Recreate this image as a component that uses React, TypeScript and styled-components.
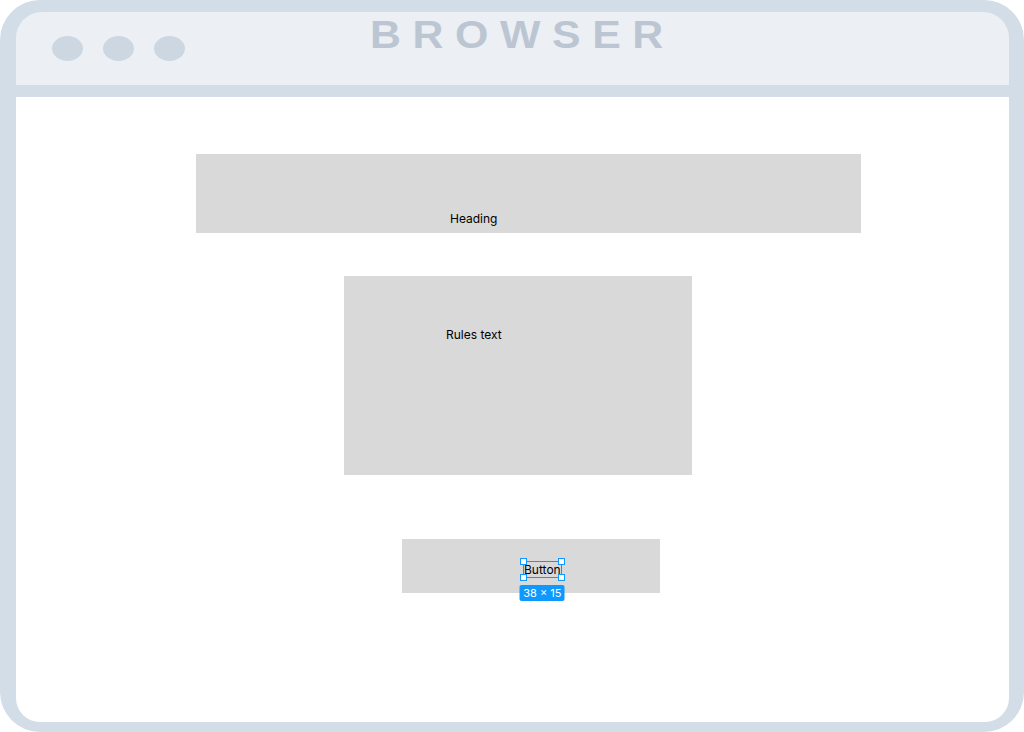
import React from "react";
import styled, { createGlobalStyle } from "styled-components";

const GlobalStyle = createGlobalStyle`
  html, body {
    margin: 0;
    padding: 0;
    background: #ffffff;
  }
  body {
    font-family: Inter, "Noto Sans", sans-serif;
  }
`;

const Frame = styled.div`
  width: 1024px;
  height: 732px;
  box-sizing: border-box;
  background: #d3dde7;
  border-radius: 40px;
  padding: 12px 15px 10px 16px;
  display: flex;
  flex-direction: column;
  gap: 12px;
`;

const TitleBar = styled.div`
  height: 73px;
  flex-shrink: 0;
  background: #ecf0f4;
  border-radius: 26px 26px 0 0;
  display: flex;
  align-items: flex-start;
`;

const Dots = styled.div`
  display: flex;
  gap: 20px;
  margin: 24px 0 0 36px;
`;

const Dot = styled.span`
  width: 31px;
  height: 25px;
  border-radius: 50%;
  background: #cdd7e2;
`;

const Title = styled.div`
  margin: 3px 0 0 185px;
  font-family: "Liberation Sans", Arial, sans-serif;
  font-weight: bold;
  font-size: 39px;
  line-height: 39px;
  letter-spacing: 10.5px;
  color: #bcc6d3;
  transform: scaleX(1.1);
  transform-origin: left center;
`;

const Content = styled.div`
  flex: 1;
  background: #ffffff;
  border-radius: 0 0 24px 24px;
  padding-top: 57px;
  display: flex;
  flex-direction: column;
  align-items: flex-start;
`;

const Block = styled.div<{ $left: number; $w: number; $h: number; $gap: number }>`
  margin-left: ${(p) => p.$left}px;
  margin-top: ${(p) => p.$gap}px;
  width: ${(p) => p.$w}px;
  height: ${(p) => p.$h}px;
  background: #d9d9d9;
  box-sizing: border-box;
  font-size: 12px;
  line-height: 15px;
  color: #000000;
`;

const HeadingBlock = styled(Block)`
  display: flex;
  align-items: flex-end;
  padding: 0 0 7px 254px;
`;

const RulesBlock = styled(Block)`
  padding: 51px 0 0 102px;
`;

const ButtonBlock = styled(Block)`
  padding: 23px 0 0 122px;
`;

const Selected = styled.span`
  position: relative;
  display: inline-block;
  height: 15px;
  outline: 1px solid #0d99ff;
`;

const Handle = styled.span<{ $x: "l" | "r"; $y: "t" | "b" }>`
  position: absolute;
  width: 7px;
  height: 7px;
  box-sizing: border-box;
  background: #ffffff;
  border: 1px solid #0d99ff;
  ${(p) => (p.$x === "l" ? "left: -4px;" : "right: -4px;")}
  ${(p) => (p.$y === "t" ? "top: -4px;" : "bottom: -4px;")}
`;

const SizeBadge = styled.span`
  position: absolute;
  top: 23px;
  left: 50%;
  transform: translateX(-50%);
  width: 45px;
  height: 16px;
  border-radius: 2px;
  background: #0d99ff;
  color: #ffffff;
  font-size: 11px;
  line-height: 16px;
  text-align: center;
  white-space: nowrap;
`;

export default function App() {
  return (
    <>
      <GlobalStyle />
      <Frame>
        <TitleBar>
          <Dots>
            <Dot />
            <Dot />
            <Dot />
          </Dots>
          <Title>BROWSER</Title>
        </TitleBar>
        <Content>
          <HeadingBlock $left={180} $w={665} $h={79} $gap={0}>
            Heading
          </HeadingBlock>
          <RulesBlock $left={328} $w={348} $h={199} $gap={43}>
            Rules text
          </RulesBlock>
          <ButtonBlock $left={386} $w={258} $h={54} $gap={64}>
            <Selected>
              Button
              <Handle $x="l" $y="t" />
              <Handle $x="r" $y="t" />
              <Handle $x="l" $y="b" />
              <Handle $x="r" $y="b" />
              <SizeBadge>38 × 15</SizeBadge>
            </Selected>
          </ButtonBlock>
        </Content>
      </Frame>
    </>
  );
}
